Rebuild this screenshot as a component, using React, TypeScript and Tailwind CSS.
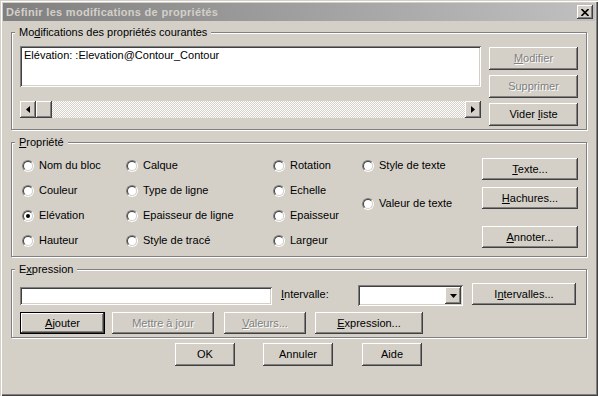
import type { ReactNode } from 'react';

// Windows 2000 classic look: bevels are stacked inset shadows.
const raised =
  'shadow-[inset_-1px_-1px_#404040,inset_1px_1px_#fff,inset_-2px_-2px_#808080,inset_2px_2px_#d4d0c8]';
const sunken =
  'shadow-[inset_1px_1px_#808080,inset_-1px_-1px_#fff,inset_2px_2px_#404040,inset_-2px_-2px_#d4d0c8]';

function Btn({
  children,
  className,
  disabled,
  isDefault,
}: {
  children: ReactNode;
  className: string;
  disabled?: boolean;
  isDefault?: boolean;
}) {
  return (
    <button
      type="button"
      className={`flex items-center justify-center bg-[#d4d0c8] ${raised} ${className} ${
        isDefault ? 'border border-black' : ''
      } ${disabled ? 'text-[#808080] [text-shadow:1px_1px_0_#fff]' : 'text-black'}`}
    >
      {children}
    </button>
  );
}

function Group({ label, className, children }: { label: ReactNode; className: string; children: ReactNode }) {
  return (
    <fieldset
      className={`border border-[#808080] shadow-[inset_1px_1px_#fff,1px_1px_#fff] ${className}`}
    >
      <legend className="ml-[3px] px-[4px] bg-[#d4d0c8] leading-[13px]">{label}</legend>
      {children}
    </fieldset>
  );
}

function Radio({ label, checked }: { label: string; checked?: boolean }) {
  return (
    <div className="flex items-center h-[25px]">
      <span className="flex w-[12px] h-[12px] rounded-full border border-t-[#808080] border-l-[#808080] border-r-white border-b-white">
        <span className="flex flex-1 items-center justify-center rounded-full border border-t-[#404040] border-l-[#404040] border-r-[#d4d0c8] border-b-[#d4d0c8] bg-white">
          {checked && <span className="w-[4px] h-[4px] rounded-full bg-black" />}
        </span>
      </span>
      <span className="ml-[5px]">{label}</span>
    </div>
  );
}

function Arrow({ dir }: { dir: 'left' | 'right' | 'down' }) {
  if (dir === 'down') {
    return (
      <svg width="7" height="4" viewBox="0 0 7 4">
        <path d="M0 0H7L3.5 4Z" fill="black" />
      </svg>
    );
  }
  return (
    <svg width="4" height="7" viewBox="0 0 4 7">
      <path d={dir === 'left' ? 'M4 0V7L0 3.5Z' : 'M0 0V7L4 3.5Z'} fill="black" />
    </svg>
  );
}

export default function App() {
  return (
    <div className="w-[598px] h-[396px] p-[3px] bg-[#d4d0c8] text-[11px] leading-[13px] text-black font-['Liberation_Sans',Arial,sans-serif] shadow-[inset_1px_1px_#d4d0c8,inset_2px_2px_#fff,inset_-1px_-1px_#404040,inset_-2px_-2px_#808080] overflow-hidden">
      {/* Title bar (inactive window) */}
      <div className="flex items-center h-[18px] bg-linear-to-r from-[#808080] to-[#c0c0c0]">
        <span className="pl-[3px] font-bold text-[11px] tracking-[0.3px] text-[#d4d0c8]">
          Définir les modifications de propriétés
        </span>
        <button
          type="button"
          className={`ml-auto mr-[2px] flex items-center justify-center w-[16px] h-[14px] bg-[#d4d0c8] ${raised}`}
        >
          <svg width="8" height="7" viewBox="0 0 8 7">
            <path d="M0.5 0L7.5 7M7.5 0L0.5 7" stroke="black" strokeWidth="1.6" />
          </svg>
        </button>
      </div>

      <div className="px-[8px] pt-[5px]">
        {/* Current property modifications */}
        <Group
          className="h-[104px]"
          label={
            <>
              Mo<u>d</u>ifications des propriétés courantes
            </>
          }
        >
          <div className="flex pl-[8px] pt-[7px]">
            <div className="w-[461px]">
              <div className={`h-[41px] bg-white pl-[4px] pt-[3px] ${sunken}`}>
                Elévation: :Elevation@Contour_Contour
              </div>
              <div className="flex h-[17px] mt-[14px]">
                <div className={`flex items-center justify-center w-[16px] ${raised}`}>
                  <Arrow dir="left" />
                </div>
                <div className={`w-[16px] ${raised}`} />
                <div className="flex-1 [background:repeating-conic-gradient(#fff_0%_25%,#d4d0c8_0%_50%)_0_0/2px_2px]" />
                <div className={`flex items-center justify-center w-[16px] ${raised}`}>
                  <Arrow dir="right" />
                </div>
              </div>
            </div>
            <div className="ml-[8px] pt-[1px] flex flex-col gap-[5px]">
              <Btn className="w-[89px] h-[23px]" disabled>
                <span>
                  <u>M</u>odifier
                </span>
              </Btn>
              <Btn className="w-[89px] h-[23px]" disabled>
                Supprimer
              </Btn>
              <Btn className="w-[89px] h-[23px]">
                <span>
                  Vider <u>l</u>iste
                </span>
              </Btn>
            </div>
          </div>
        </Group>

        {/* Property */}
        <Group
          className="h-[121px] mt-[6px]"
          label={
            <>
              <u>P</u>ropriété
            </>
          }
        >
          <div className="flex pl-[10px] pt-[4px]">
            <div className="w-[104px]">
              <Radio label="Nom du bloc" />
              <Radio label="Couleur" />
              <Radio label="Elévation" checked />
              <Radio label="Hauteur" />
            </div>
            <div className="w-[147px]">
              <Radio label="Calque" />
              <Radio label="Type de ligne" />
              <Radio label="Epaisseur de ligne" />
              <Radio label="Style de tracé" />
            </div>
            <div className="w-[89px]">
              <Radio label="Rotation" />
              <Radio label="Echelle" />
              <Radio label="Epaisseur" />
              <Radio label="Largeur" />
            </div>
            <div className="w-[120px]">
              <Radio label="Style de texte" />
              <div className="mt-[13px]">
                <Radio label="Valeur de texte" />
              </div>
            </div>
            <div className="pt-[5px] flex flex-col">
              <Btn className="w-[96px] h-[22px]">
                <span>
                  <u>T</u>exte...
                </span>
              </Btn>
              <Btn className="w-[96px] h-[22px] mt-[7px]">
                <span>
                  <u>H</u>achures...
                </span>
              </Btn>
              <Btn className="w-[96px] h-[22px] mt-[17px]">
                <span>
                  <u>A</u>nnoter...
                </span>
              </Btn>
            </div>
          </div>
        </Group>

        {/* Expression */}
        <Group
          className="h-[75px] mt-[6px]"
          label={
            <>
              E<u>x</u>pression
            </>
          }
        >
          <div className="pl-[8px] pt-[7px]">
            <div className="flex items-start">
              <div className={`w-[252px] h-[18px] mt-[4px] bg-white ${sunken}`} />
              <span className="w-[77px] ml-[9px] mt-[5px]">
                <u>I</u>ntervalle:
              </span>
              <div className={`flex w-[105px] h-[21px] mt-[2px] p-[2px] bg-white ${sunken}`}>
                <div className="flex-1" />
                <div className={`flex items-center justify-center w-[16px] bg-[#d4d0c8] ${raised}`}>
                  <Arrow dir="down" />
                </div>
              </div>
              <Btn className="w-[104px] h-[22px] ml-[9px]">
                <span>
                  I<u>n</u>tervalles...
                </span>
              </Btn>
            </div>
            <div className="flex mt-[6px]">
              <Btn className="w-[85px] h-[22px]" isDefault>
                <span>
                  <u>A</u>jouter
                </span>
              </Btn>
              <Btn className="w-[102px] h-[22px] ml-[7px]" disabled>
                Mettre à jour
              </Btn>
              <Btn className="w-[82px] h-[22px] ml-[10px]" disabled>
                <span>
                  <u>V</u>aleurs...
                </span>
              </Btn>
              <Btn className="w-[108px] h-[22px] ml-[9px]">
                <span>
                  <u>E</u>xpression...
                </span>
              </Btn>
            </div>
          </div>
        </Group>

        {/* Dialog buttons */}
        <div className="flex pl-[164px] mt-[5px]">
          <Btn className="w-[60px] h-[23px]">OK</Btn>
          <Btn className="w-[70px] h-[23px] ml-[28px]">Annuler</Btn>
          <Btn className="w-[60px] h-[23px] ml-[29px]">Aide</Btn>
        </div>
      </div>
    </div>
  );
}
